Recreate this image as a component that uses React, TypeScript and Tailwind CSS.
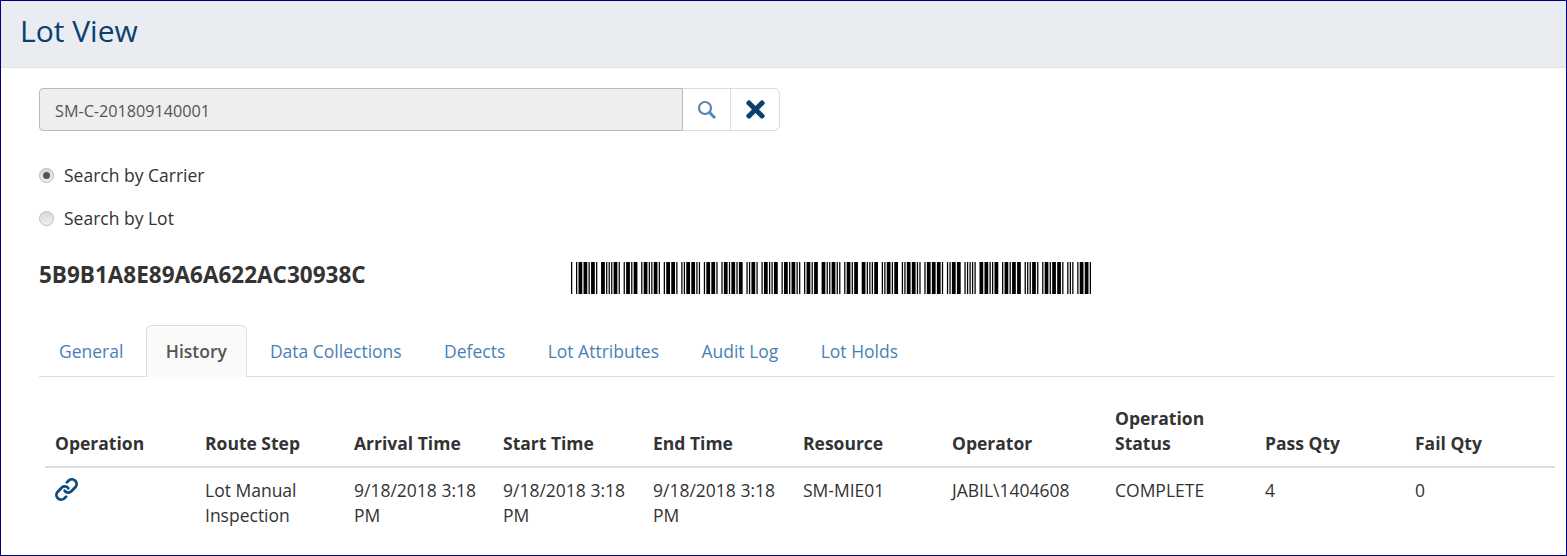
import { FaTimes } from "react-icons/fa";

const BARCODE_VALUE = "5B9B1A8E89A6A622AC30938C";

// Code 39 patterns: 9 elements, bar/space alternating, w = wide
const CODE39: Record<string, string> = {
  "0": "nnnwwnwnn",
  "1": "wnnwnnnnw",
  "2": "nnwwnnnnw",
  "3": "wnwwnnnnn",
  "4": "nnnwwnnnw",
  "5": "wnnwwnnnn",
  "6": "nnwwwnnnn",
  "7": "nnnwnnwnw",
  "8": "wnnwnnwnn",
  "9": "nnwwnnwnn",
  A: "wnnnnwnnw",
  B: "nnwnnwnnw",
  C: "wnwnnwnnn",
  D: "nnnnwwnnw",
  E: "wnnnwwnnn",
  F: "nnwnwwnnn",
  "*": "nwnnwnwnn",
};

function encodeBars(value: string) {
  const bars: { x: number; w: number }[] = [];
  let x = 0;
  for (const ch of `*${value}*`) {
    CODE39[ch].split("").forEach((e, i) => {
      const w = e === "w" ? 3 : 1;
      if (i % 2 === 0) bars.push({ x, w });
      x += w;
    });
    x += 1;
  }
  return { bars, total: x - 1 };
}

function Barcode() {
  const { bars, total } = encodeBars(BARCODE_VALUE);
  return (
    <svg width={520} height={32} viewBox={`0 0 ${total} 32`} preserveAspectRatio="none" className="block">
      {bars.map((b, i) => (
        <rect key={i} x={b.x} y={0} width={b.w} height={32} fill="#000" />
      ))}
    </svg>
  );
}

function ChainIcon() {
  return (
    <svg width="29" height="29" viewBox="0 0 24 24" fill="none" stroke="#0b4a80" strokeWidth="2.3" strokeLinecap="round" className="-m-[3px]">
      <path d="M10.5 13c1.2 1.8 3.8 2 5.3.6l3.6-3.6a3.9 3.9 0 0 0-5.5-5.5l-1.6 1.6" />
      <path d="M13.5 11c-1.2-1.8-3.8-2-5.3-.6l-3.6 3.6a3.9 3.9 0 0 0 5.5 5.5l1.6-1.6" />
    </svg>
  );
}

const TABS = ["General", "History", "Data Collections", "Defects", "Lot Attributes", "Audit Log", "Lot Holds"];

const COLUMNS: { label: string; width: string }[] = [
  { label: "Operation", width: "w-[150px]" },
  { label: "Route Step", width: "w-[149px]" },
  { label: "Arrival Time", width: "w-[149px]" },
  { label: "Start Time", width: "w-[150px]" },
  { label: "End Time", width: "w-[150px]" },
  { label: "Resource", width: "w-[149px]" },
  { label: "Operator", width: "w-[163px]" },
  { label: "Operation Status", width: "w-[150px]" },
  { label: "Pass Qty", width: "w-[150px]" },
  { label: "Fail Qty", width: "w-[150px]" },
];

const CELL = "px-[10px] pt-[10px] pb-[12px] align-top";

export default function App() {
  return (
    <div className="h-[556px] w-[1567px] overflow-hidden border border-[#000080] bg-white font-['Open_Sans',sans-serif] text-[17.5px] leading-[25px] text-[#333]">
      <div className="flex h-[67px] items-center border-b border-[#dfe2e8] bg-[#e9ecf1] pb-[7px] pl-[19px]">
        <h1 className="text-[30px] leading-[40px] text-[#0b3f6f]">Lot View</h1>
      </div>

      <div className="pl-[38px] pr-[11px]">
        {/* Search box */}
        <div className="mt-5 flex h-[43px] w-[741px]">
          <div className="flex flex-1 items-center rounded-l-[4px] border border-[#bbb] bg-[#eee] pl-[15px] pt-[3px] text-[16.2px] text-[#555]">SM-C-201809140001</div>
          <button className="flex w-[48px] items-center justify-center border-y border-r border-[#ddd]">
            <svg width="20" height="20" viewBox="0 0 20 20" fill="none" stroke="#5b86ad">
              <circle cx="8" cy="8" r="6" strokeWidth="2.2" />
              <path d="M12.5 12.5 L18 18" strokeWidth="3" />
            </svg>
          </button>
          <button className="flex w-[49px] items-center justify-center rounded-r-[6px] border-y border-r border-[#ddd]">
            <FaTimes className="h-[27px] w-[27px] text-[#0b3f6f]" />
          </button>
        </div>

        {/* Radios */}
        <div className="mt-[32px] flex flex-col gap-[18px]">
          <label className="flex items-center gap-[10px]">
            <span className="flex h-[15px] w-[15px] items-center justify-center rounded-full border border-[#bbb] bg-gradient-to-b from-[#d8d8d8] to-[#f0f0f0]">
              <span className="h-[7px] w-[7px] rounded-full bg-[#555]" />
            </span>
            Search by Carrier
          </label>
          <label className="flex items-center gap-[10px]">
            <span className="h-[15px] w-[15px] rounded-full border border-[#bbb] bg-gradient-to-b from-[#d8d8d8] to-[#f0f0f0]" />
            Search by Lot
          </label>
        </div>

        {/* Lot id + barcode */}
        <div className="mt-[31px] flex h-[32px] items-center">
          <div className="w-[532px] pb-[8px] text-[22.5px] font-bold text-[#333]">5B9B1A8E89A6A622AC30938C</div>
          <Barcode />
        </div>

        {/* Tabs */}
        <div className="mt-[31px] flex h-[52px] border-b border-[#ddd]">
          {TABS.map((t) =>
            t === "History" ? (
              <div key={t} className="-mb-px mr-[3px] flex h-[52px] items-center rounded-t-[6px] border border-b-0 border-[#ddd] bg-[#fafafa] px-[19px] font-semibold text-[#555]">
                {t}
              </div>
            ) : (
              <div key={t} className="mr-[2.4px] flex items-center px-[20px] pt-[1px] text-[#4a7fb5]">
                {t}
              </div>
            ),
          )}
        </div>

        {/* History table */}
        <table className="ml-[6px] mt-[29px] w-[1510px] table-fixed border-collapse">
          <colgroup>
            {COLUMNS.map((c) => (
              <col key={c.label} className={c.width} />
            ))}
          </colgroup>
          <thead>
            <tr className="border-b-2 border-[#ddd]">
              {COLUMNS.map((c) => (
                <th key={c.label} className="px-[10px] pb-[10px] text-left align-bottom font-bold text-[#333]">
                  {c.label}
                </th>
              ))}
            </tr>
          </thead>
          <tbody>
            <tr>
              <td className={CELL}>
                <ChainIcon />
              </td>
              <td className={CELL}>Lot Manual Inspection</td>
              <td className={CELL}>9/18/2018 3:18 PM</td>
              <td className={CELL}>9/18/2018 3:18 PM</td>
              <td className={CELL}>9/18/2018 3:18 PM</td>
              <td className={CELL}>SM-MIE01</td>
              <td className={CELL}>JABIL\1404608</td>
              <td className={CELL}>COMPLETE</td>
              <td className={CELL}>4</td>
              <td className={CELL}>0</td>
            </tr>
          </tbody>
        </table>
      </div>
    </div>
  );
}
